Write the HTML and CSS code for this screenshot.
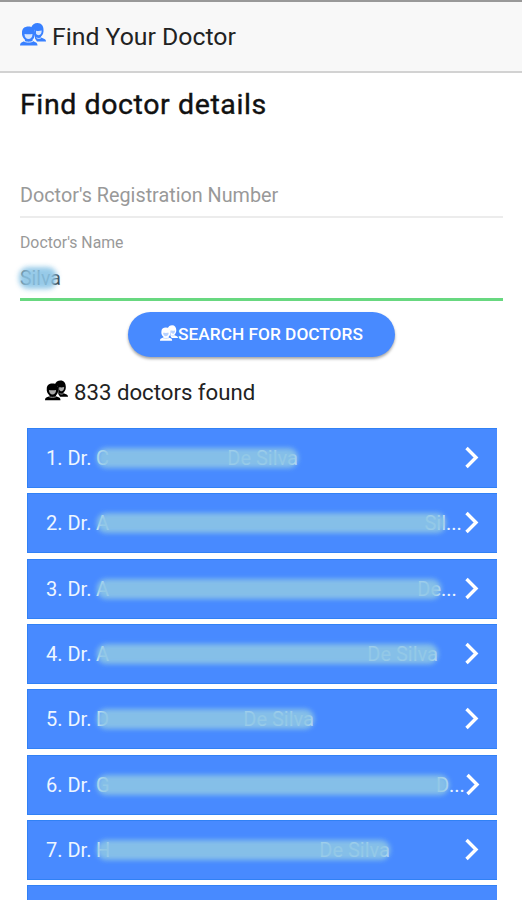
FILE: index.html
```
<!DOCTYPE html>
<html lang="en">
<head>
    <meta charset="UTF-8">
    <meta name="viewport" content="width=device-width, initial-scale=1.0">
    <title>Find Your Doctor</title>
    <link rel="stylesheet" href="styles.css">
</head>
<body>
    <svg width="0" height="0" class="defs">
        <symbol id="people" viewBox="0 0 26 24">
            <path d="M11 5C12 1.500 14.500 0 17.500 0c4 0 6 3 6 7v1.500c-.3 3-1.500 4-2.500 5v1l3.500 1.500c1 .5 1.500 1.500 1.500 2.500H17l-2-3V9c0-2-1.500-3.500-4-4z"/>
            <path class="face" d="M16 7.800c2.200.3 4 .2 5.700-.2 0 2.900-1.200 4.600-2.900 4.600-1.300 0-2.300-.7-2.800-1.700z"/>
            <path class="line" d="M16.500 14.800c1.500.9 3 .9 4.500 0"/>
            <path d="M2 9.500C2 5.500 4.500 3.500 8.500 3.500S15 5.500 15 9.500v2c-.3 2.800-1.500 4.300-2.500 5.300v1l3.500 1.600c1 .5 1.500 1.800 1.500 3.100H0c0-1.300.5-2.600 1.500-3.100l3.500-1.600v-1C4 15.800 2.300 14.300 2 11.500z"/>
            <path class="face" d="M4.500 11c2.700.3 5.300.3 8 0 0 3.300-1.800 5-4 5s-4-1.700-4-5z"/>
            <path class="line" d="M4 18.200c2.500 1.300 6.500 1.300 9 0"/>
        </symbol>
        <symbol id="chevron" viewBox="0 0 16 24">
            <path d="M2.500 2l9.500 9.500L2.500 21"/>
        </symbol>
    </svg>

    <header class="toolbar">
        <svg class="people"><use href="#people"/></svg>
        <div class="title">Find Your Doctor</div>
    </header>

    <main class="content">
        <h1>Find doctor details</h1>
        <div class="field">Doctor's Registration Number</div>
        <div class="field active">
            <label>Doctor's Name</label>
            <div class="value"><span class="smudge">Silva</span></div>
        </div>

        <button class="search"><svg class="people"><use href="#people"/></svg>SEARCH FOR DOCTORS</button>

        <div class="found">
            <svg class="people"><use href="#people"/></svg>
            <span>833 doctors found</span>
        </div>

        <div class="list">
            <div class="row">
                <span class="num">1. Dr.</span>
                <span class="name smudge" style="width: 202px"><i>C</i><i>De Silva</i></span>
                <svg class="chevron"><use href="#chevron"/></svg>
            </div>
            <div class="row">
                <span class="num">2. Dr.</span>
                <span class="name smudge" style="width: 350px"><i>A</i><i>Sil</i></span>
                <span class="dots">...</span>
                <svg class="chevron"><use href="#chevron"/></svg>
            </div>
            <div class="row">
                <span class="num">3. Dr.</span>
                <span class="name smudge" style="width: 345px"><i>A</i><i>De</i></span>
                <span class="dots">...</span>
                <svg class="chevron"><use href="#chevron"/></svg>
            </div>
            <div class="row">
                <span class="num">4. Dr.</span>
                <span class="name smudge" style="width: 342px"><i>A</i><i>De Silva</i></span>
                <svg class="chevron"><use href="#chevron"/></svg>
            </div>
            <div class="row">
                <span class="num">5. Dr.</span>
                <span class="name smudge" style="width: 218px"><i>D</i><i>De Silva</i></span>
                <svg class="chevron"><use href="#chevron"/></svg>
            </div>
            <div class="row">
                <span class="num">6. Dr.</span>
                <span class="name smudge" style="width: 353px"><i>G</i><i>D</i></span>
                <span class="dots">...</span>
                <svg class="chevron"><use href="#chevron"/></svg>
            </div>
            <div class="row">
                <span class="num">7. Dr.</span>
                <span class="name smudge" style="width: 294px"><i>H</i><i>De Silva</i></span>
                <svg class="chevron"><use href="#chevron"/></svg>
            </div>
            <div class="row"></div>
        </div>
    </main>
</body>
</html>
```
FILE: styles.css
```
* {
    box-sizing: border-box;
}
body {
    margin: 0;
    height: 900px;
    overflow: hidden;
    background: #fff;
    color: #111;
    font-family: Roboto, sans-serif;
}
.defs {
    display: block;
}
.people {
    width: 26px;
    height: 24px;
    flex: none;
    fill: currentColor;
    --face: #fff;
}
.face {
    fill: var(--face);
}
.line {
    fill: none;
    stroke: var(--face);
    stroke-width: 1;
}
.toolbar {
    height: 73px;
    display: flex;
    align-items: center;
    padding: 0 20px;
    background: #f8f8f8;
    border-top: 2px solid #999;
    border-bottom: 2px solid #d2d2d2;
}
.toolbar .people {
    color: #3880ff;
    --face: #d4e4ff;
    margin-top: -3px;
}
.title {
    margin: 1px 0 0 6px;
    font-size: 24.8px;
    line-height: 30px;
    color: #222;
}
.content {
    height: 827px;
    overflow: hidden;
    padding: 0 19px 0 20px;
}
h1 {
    margin: 13px 0 0;
    font-size: 28.5px;
    line-height: 37px;
    font-weight: 400;
    letter-spacing: 0.6px;
    -webkit-text-stroke: 0.4px #111;
}
.field {
    margin-top: 53px;
    height: 42px;
    padding-top: 7px;
    border-bottom: 2px solid #ececec;
    font-size: 19.8px;
    line-height: 25px;
    color: #999;
}
.field.active {
    margin-top: 0;
    height: 83px;
    padding-top: 15px;
    border-bottom: 3px solid #68d880;
}
label {
    display: block;
    font-size: 15.8px;
    line-height: 20px;
}
.value {
    margin-top: 13px;
    font-size: 19.5px;
    line-height: 26px;
    color: #333;
}
.smudge {
    position: relative;
}
.smudge::after {
    content: "";
    position: absolute;
    inset: 2px 0 2px 1px;
    border-radius: 9px;
    background: #8cc5e6;
    opacity: 0.9;
    filter: blur(2.5px);
}
.value .smudge::after {
    inset: 0 4px 1px -1px;
}
.search {
    display: flex;
    align-items: center;
    justify-content: center;
    width: 267px;
    height: 45px;
    margin: 11px 0 0 108px;
    padding: 0 0 2px;
    border: 0;
    border-radius: 23px;
    background: #488aff;
    box-shadow: 0 2px 3px rgba(0, 0, 0, 0.35);
    color: #fff;
    font: 500 17.3px Roboto, sans-serif;
}
.search .people {
    width: 18px;
    height: 17px;
    --face: #b5d0ff;
}
.found {
    display: flex;
    align-items: center;
    margin: 19px 0 0 25px;
    height: 32px;
    font-size: 22.2px;
    color: #222;
}
.found .people {
    width: 23px;
    height: 22px;
    margin: -3px 6px 0 0;
    color: #000;
    --face: #aaa;
}
.list {
    display: grid;
    gap: 5.35px;
    margin: 20px 6px 0 7px;
}
.row {
    display: flex;
    align-items: center;
    width: 470px;
    height: 60px;
    padding: 0 17px 0 18px;
    background: #488aff;
    border: 1px solid #3181f5;
    border-width: 1px 0 1px 1px;
    color: #eef6ff;
    font-size: 20px;
    line-height: 24px;
}
.num {
    width: 50px;
    flex: none;
}
.name {
    display: flex;
    justify-content: space-between;
    flex: none;
}
.name i {
    font-style: normal;
    color: #d5ecf8;
}
.chevron {
    width: 16px;
    height: 24px;
    margin-left: auto;
    flex: none;
    fill: none;
    stroke: #fff;
    stroke-width: 3.4;
}
```
